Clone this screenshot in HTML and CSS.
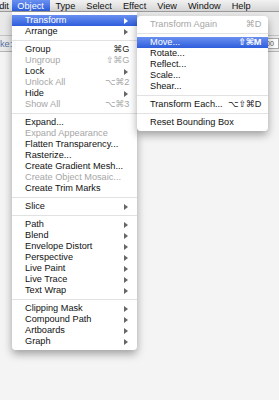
FILE: index.html
```html
<!DOCTYPE html>
<html lang="en">
<head>
  <meta charset="UTF-8">
  <title>Object menu</title>
  <link rel="stylesheet" href="styles.css">
</head>
<body>
  <!-- Menu bar -->
  <div class="menubar">
    <span class="bar-item first">Edit</span>
    <span class="bar-item active">Object</span>
    <span class="bar-item">Type</span>
    <span class="bar-item">Select</span>
    <span class="bar-item">Effect</span>
    <span class="bar-item">View</span>
    <span class="bar-item">Window</span>
    <span class="bar-item">Help</span>
  </div>

  <!-- Control panel behind the menus -->
  <div class="control">
    <div class="control-top"></div>
    <div class="control-row">
      <span class="label">ke:</span>
      <span class="swatch"></span>
      <span class="spacer"></span>
      <span class="field">00</span>
    </div>
  </div>
  <div class="canvas"></div>

  <!-- Object menu -->
  <div class="menu main-menu">
    <div class="item active"><span>Transform</span><i class="arrow"></i></div>
    <div class="item"><span>Arrange</span><i class="arrow"></i></div>
    <div class="sep"></div>
    <div class="item"><span>Group</span><b>⌘G</b></div>
    <div class="item off"><span>Ungroup</span><b>⇧⌘G</b></div>
    <div class="item"><span>Lock</span><i class="arrow"></i></div>
    <div class="item off"><span>Unlock All</span><b>⌥⌘2</b></div>
    <div class="item"><span>Hide</span><i class="arrow"></i></div>
    <div class="item off"><span>Show All</span><b>⌥⌘3</b></div>
    <div class="sep"></div>
    <div class="item"><span>Expand...</span></div>
    <div class="item off"><span>Expand Appearance</span></div>
    <div class="item"><span>Flatten Transparency...</span></div>
    <div class="item"><span>Rasterize...</span></div>
    <div class="item"><span>Create Gradient Mesh...</span></div>
    <div class="item off"><span>Create Object Mosaic...</span></div>
    <div class="item"><span>Create Trim Marks</span></div>
    <div class="sep"></div>
    <div class="item"><span>Slice</span><i class="arrow"></i></div>
    <div class="sep"></div>
    <div class="item"><span>Path</span><i class="arrow"></i></div>
    <div class="item"><span>Blend</span><i class="arrow"></i></div>
    <div class="item"><span>Envelope Distort</span><i class="arrow"></i></div>
    <div class="item"><span>Perspective</span><i class="arrow"></i></div>
    <div class="item"><span>Live Paint</span><i class="arrow"></i></div>
    <div class="item"><span>Live Trace</span><i class="arrow"></i></div>
    <div class="item"><span>Text Wrap</span><i class="arrow"></i></div>
    <div class="sep"></div>
    <div class="item"><span>Clipping Mask</span><i class="arrow"></i></div>
    <div class="item"><span>Compound Path</span><i class="arrow"></i></div>
    <div class="item"><span>Artboards</span><i class="arrow"></i></div>
    <div class="item"><span>Graph</span><i class="arrow"></i></div>
  </div>

  <!-- Transform submenu -->
  <div class="menu sub-menu">
    <div class="item off"><span>Transform Again</span><b>⌘D</b></div>
    <div class="sep"></div>
    <div class="item active"><span>Move...</span><b>⇧⌘M</b></div>
    <div class="item"><span>Rotate...</span></div>
    <div class="item"><span>Reflect...</span></div>
    <div class="item"><span>Scale...</span></div>
    <div class="item"><span>Shear...</span></div>
    <div class="sep"></div>
    <div class="item"><span>Transform Each...</span><b>⌥⇧⌘D</b></div>
    <div class="sep"></div>
    <div class="item"><span>Reset Bounding Box</span></div>
  </div>
</body>
</html>
```

FILE: styles.css
```css
/* Global */
body {
  margin: 0;
  padding: 0;
  width: 279px;
  height: 400px;
  overflow: hidden;
  position: relative;
  background: #f4f4f4;
  font-family: 'Liberation Sans', 'DejaVu Sans', sans-serif;
  font-size: 9.2px;
  color: #111;
}

/* Menu bar */
.menubar {
  height: 12px;
  display: flex;
  align-items: stretch;
  background: linear-gradient(#f2f2f2, #d6d6d6);
  border-bottom: 1px solid #9a9a9a;
  box-sizing: border-box;
  white-space: nowrap;
}

.bar-item {
  padding: 0 5.5px;
  line-height: 12px;
  color: #111;
  flex-shrink: 0;
}

.bar-item.first {
  margin-left: -7px;
  padding: 0 3.5px 0 0;
}

.bar-item.active {
  padding: 0 6px 0 5px;
  color: #fff;
  background: linear-gradient(#6a90f0, #2e5edc);
}

/* Control panel */
.control {
  height: 39px;
  background: #e9e9e9;
  border-bottom: 1px solid #b5b5b5;
}

.control-top {
  height: 23px;
  border-bottom: 1px solid #c4c4c4;
}

.control-row {
  display: flex;
  align-items: center;
  height: 15px;
}

.label {
  color: #5573a8;
}

.swatch {
  width: 3px;
  height: 10px;
  margin-left: 1px;
  background: #2f5bd6;
}

.spacer {
  flex: 1;
}

.field {
  width: 12px;
  height: 9px;
  line-height: 9px;
  font-size: 7px;
  padding-left: 2px;
  background: #fff;
  border: 1px solid #aaa;
  color: #555;
}

.canvas {
  height: 300px;
}

/* Menus */
.menu {
  position: absolute;
  background: rgba(255, 255, 255, 0.97);
  box-shadow: 0 4px 9px rgba(0, 0, 0, 0.35);
  border-radius: 0 0 4px 4px;
  padding: 3px 0;
}

.main-menu {
  top: 12px;
  left: 12px;
  width: 125px;
}

.sub-menu {
  top: 16px;
  left: 137px;
  width: 131px;
  border-radius: 4px;
}

.item {
  height: 11px;
  line-height: 11px;
  display: flex;
  align-items: center;
  justify-content: space-between;
  padding: 0 8px 0 13px;
  white-space: nowrap;
}

.sub-menu .item {
  padding: 0 7px 0 13px;
}

.item b {
  font-weight: normal;
  color: #222;
  letter-spacing: -0.3px;
}

.item.off,
.item.off b {
  color: #a6a6a6;
}

.item.active {
  color: #fff;
  background: linear-gradient(#6a90f0, #2e5edc);
}

.item.active b {
  color: #fff;
  font-weight: bold;
}

.arrow {
  width: 0;
  height: 0;
  margin-right: 1px;
  border-left: 4px solid #666;
  border-top: 3px solid transparent;
  border-bottom: 3px solid transparent;
}

.item.active .arrow {
  border-left-color: #fff;
}

.sep {
  height: 7px;
  display: flex;
  align-items: center;
}

.sep::before {
  content: '';
  flex: 1;
  height: 1px;
  background: #e2e2e2;
}
```
